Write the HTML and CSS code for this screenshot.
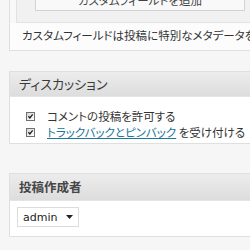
FILE: index.html
```html
<!DOCTYPE html>
<html lang="ja">
<head>
    <meta charset="UTF-8">
    <title>投稿の編集</title>
    <link rel="stylesheet" href="styles.css">
</head>
<body>
    <div class="wrap">
        <div class="postbox meta">
            <div class="newmeta">
                <div class="addbtn">カスタムフィールドを追加</div>
            </div>
            <p class="hint">カスタムフィールドは投稿に特別なメタデータを追加するために使用できます。</p>
        </div>

        <div class="postbox">
            <h3>ディスカッション</h3>
            <div class="inside discussion">
                <label class="row">
                    <span class="cb"><svg width="9" height="9" viewBox="0 0 9 9"><path d="M1.8 4.2 L3.7 6.4 L7.3 1.9" fill="none" stroke="#1a1a1a" stroke-width="1.6"/></svg></span>
                    コメントの投稿を許可する
                </label>
                <label class="row">
                    <span class="cb"><svg width="9" height="9" viewBox="0 0 9 9"><path d="M1.8 4.2 L3.7 6.4 L7.3 1.9" fill="none" stroke="#1a1a1a" stroke-width="1.6"/></svg></span>
                    <a href="#">トラックバックとピンバック</a>&nbsp;を受け付ける
                </label>
            </div>
        </div>

        <div class="postbox author">
            <h3 class="bold">投稿作成者</h3>
            <div class="inside">
                <span class="select">admin
                    <svg width="7" height="4" viewBox="0 0 7 4"><path d="M0 0 H7 L3.5 4 Z" fill="#222"/></svg>
                </span>
            </div>
        </div>
    </div>
</body>
</html>
```

FILE: styles.css
```css
body {
    margin: 0;
    padding: 0;
    background-color: #f6f6f6;
    color: #333;
    font-family: 'DejaVu Sans', 'Noto Sans CJK JP', sans-serif;
    overflow: hidden;
}
.wrap {
    padding-left: 9px;
    width: 300px;
}
.postbox {
    border: 1px solid #dfdfdf;
    background-color: #fff;
    margin-top: 20px;
}
.postbox h3 {
    margin: 0;
    height: 24px;
    line-height: 24px;
    padding-left: 9px;
    font-family: 'Noto Sans CJK JP', sans-serif;
    font-size: 13px;
    font-weight: normal;
    color: #3a3a3a;
    background: linear-gradient(#ececec, #dddddd);
    border-bottom: 1px solid #e4e4e4;
    font-feature-settings: "palt";
}
.postbox h3.bold {
    font-weight: bold;
    height: 26px;
    line-height: 26px;
    font-size: 12.5px;
    color: #464646;
}
.meta {
    margin-top: -18px;
    background-color: #f8f8f8;
}
.newmeta {
    margin-left: 6px;
    padding: 6px 5px 11px 18px;
    background-color: #f1f1f1;
    border-left: 1px solid #e2e2e2;
    border-bottom: 1px solid #e2e2e2;
}
.addbtn {
    height: 20px;
    line-height: 20px;
    width: 208px;
    border: 1px solid #d2d2d2;
    background-color: #f9f9f9;
    font-family: 'Noto Sans CJK JP', sans-serif;
    font-size: 11.5px;
    text-align: center;
    color: #444;
    font-feature-settings: "palt";
}
.hint {
    margin: 0;
    padding: 4px 12px 6px;
    line-height: 17px;
    font-family: 'Noto Sans CJK JP', sans-serif;
    font-size: 11.5px;
    white-space: nowrap;
    background-color: #fcfcfc;
    font-feature-settings: "palt";
}
.discussion {
    padding: 11px 0 3px 16px;
}
.row {
    display: flex;
    align-items: center;
    height: 16px;
    font-family: 'Noto Sans CJK JP', sans-serif;
    font-size: 11.5px;
    white-space: nowrap;
    font-feature-settings: "palt";
}
.row a {
    color: #21759b;
    text-decoration: underline;
}
.cb {
    display: flex;
    width: 9px;
    height: 9px;
    margin-right: 12px;
    box-sizing: border-box;
    border: 1px solid #6f6f6f;
    background: linear-gradient(135deg, #d8d8d8, #ffffff);
    align-items: center;
    justify-content: center;
}
.cb svg {
    width: 7px;
    height: 7px;
}
.author {
    margin-top: 29px;
}
.author .inside {
    padding: 6px 0 9px 7px;
}
.select {
    display: flex;
    align-items: center;
    justify-content: space-between;
    box-sizing: border-box;
    width: 62px;
    height: 20px;
    padding: 0 5px 0 5px;
    border: 1px solid #dcdcdc;
    background-color: #fff;
    font-size: 11px;
    color: #222;
}
```
